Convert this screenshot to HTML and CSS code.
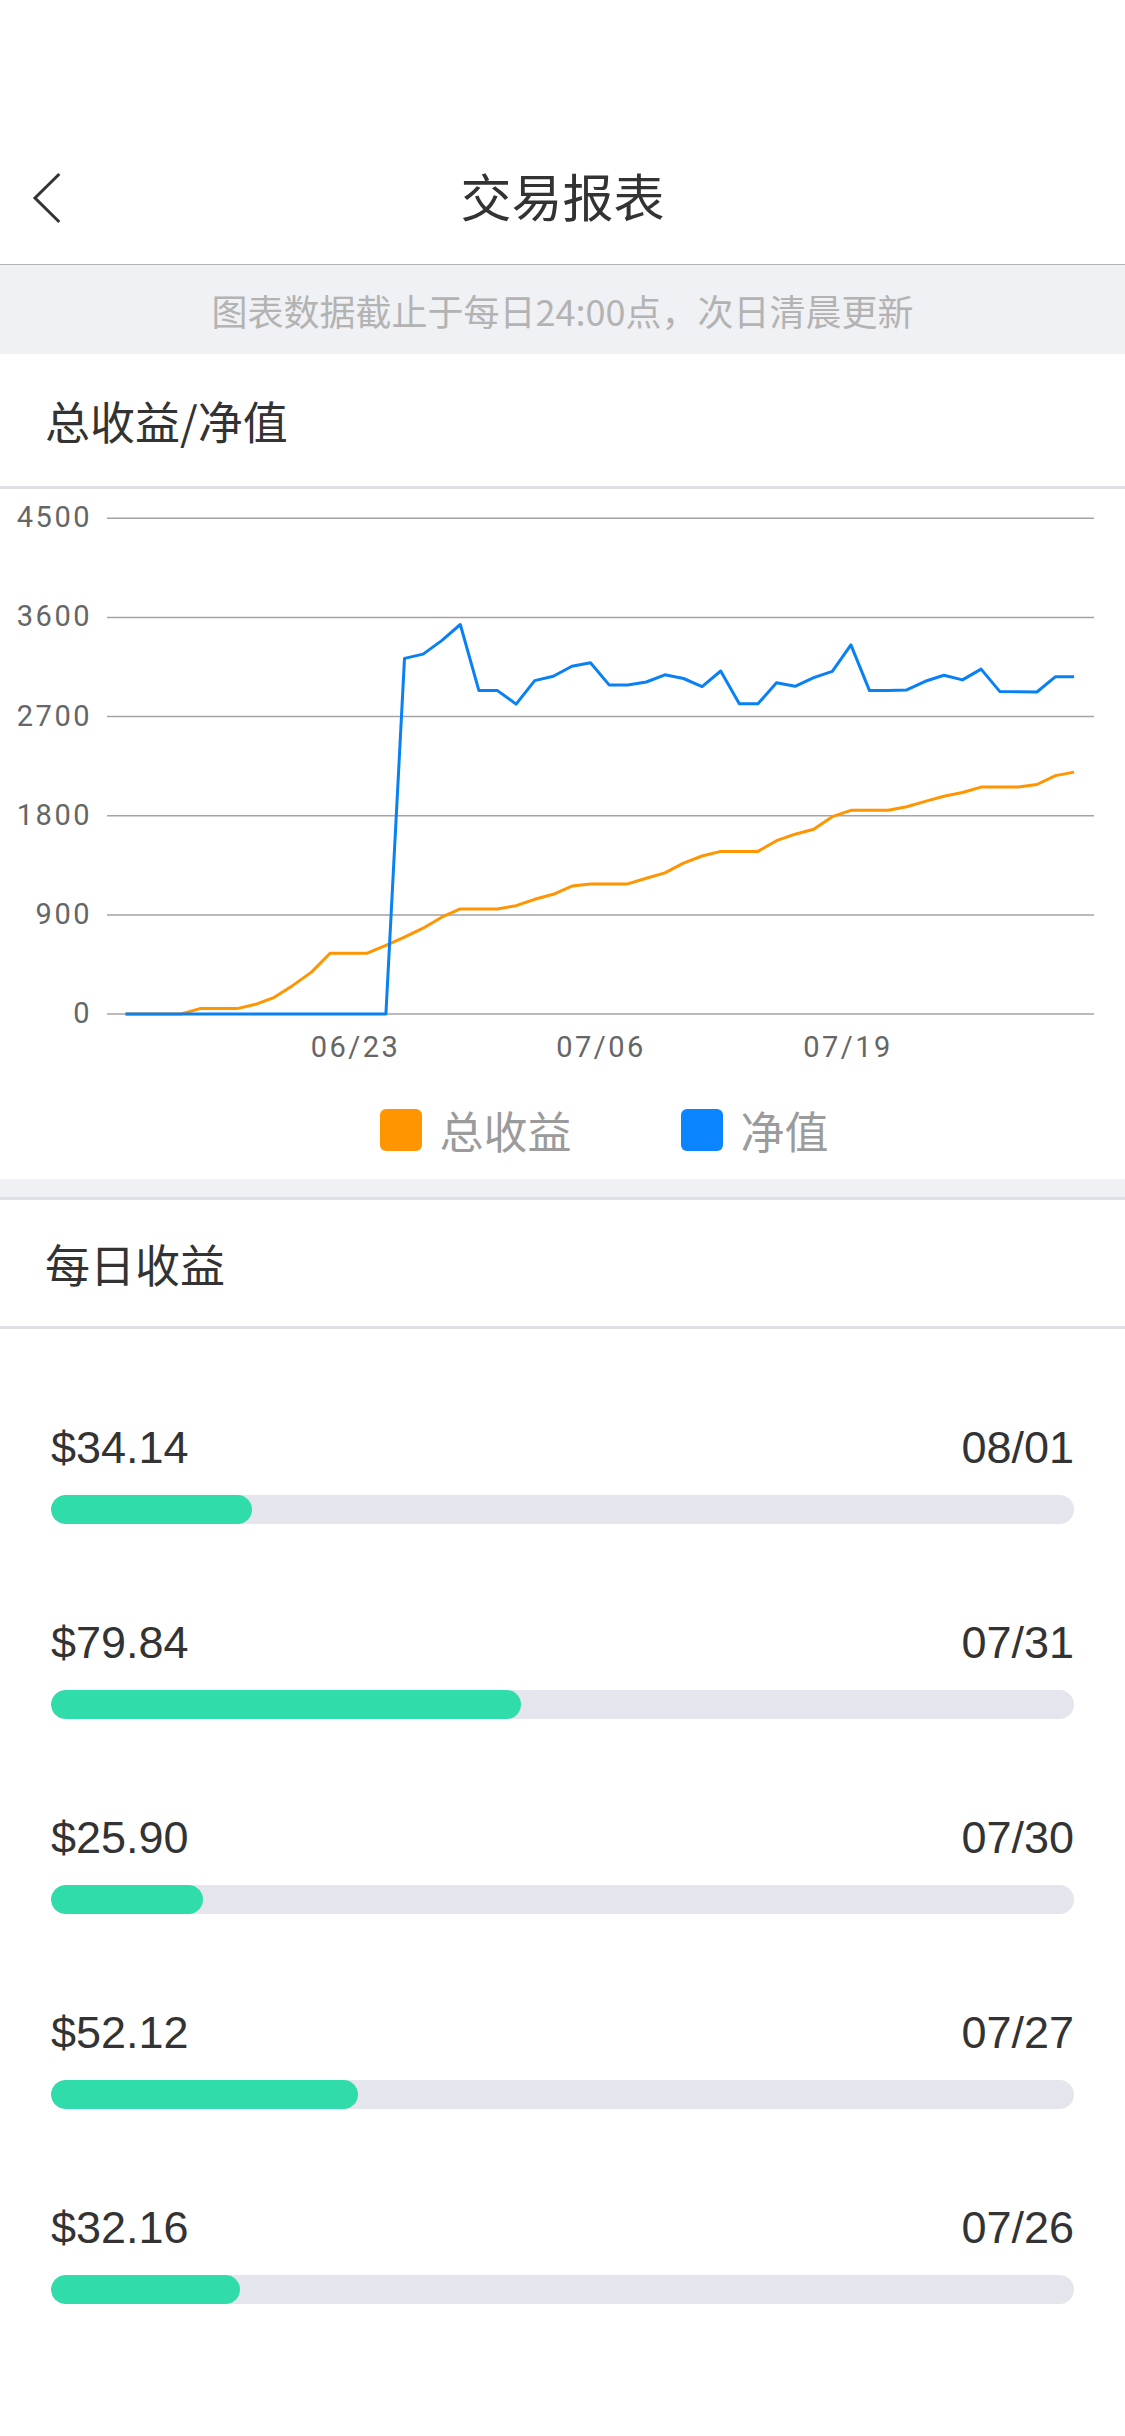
FILE: index.html
```html
<!DOCTYPE html>
<html lang="zh-CN">
<head>
  <meta charset="UTF-8">
  <meta name="viewport" content="width=device-width, initial-scale=1.0">
  <title>交易报表</title>
  <link rel="stylesheet" href="styles.css">
</head>
<body>
  <div class="page">
    <div class="status-bar"></div>

    <div class="nav">
      <a class="nav-back" href="#">
        <svg width="30" height="52" viewBox="0 0 30 52">
          <polyline points="27.3,2 3,26 27.3,50" fill="none" stroke="#333" stroke-width="3"/>
        </svg>
      </a>
      <div class="nav-title">交易报表</div>
      <div></div>
    </div>

    <div class="notice">图表数据截止于每日24:00点，次日清晨更新</div>

    <div class="section-head">总收益/净值</div>

    <div class="chart-panel">
      <svg class="chart" width="1125" height="590" viewBox="0 0 1125 590">
        <g class="grid">
          <line x1="107" x2="1094" y1="29.3" y2="29.3"/>
          <line x1="107" x2="1094" y1="128.4" y2="128.4"/>
          <line x1="107" x2="1094" y1="227.6" y2="227.6"/>
          <line x1="107" x2="1094" y1="326.7" y2="326.7"/>
          <line x1="107" x2="1094" y1="425.9" y2="425.9"/>
          <line x1="107" x2="1094" y1="525" y2="525"/>
        </g>
        <g class="axis-y">
          <text x="92" y="38.3">4500</text>
          <text x="92" y="137.4">3600</text>
          <text x="92" y="236.6">2700</text>
          <text x="92" y="335.7">1800</text>
          <text x="92" y="434.9">900</text>
          <text x="92" y="534">0</text>
        </g>
        <g class="axis-x">
          <text x="355.5" y="567.7">06/23</text>
          <text x="601" y="567.7">07/06</text>
          <text x="848" y="567.7">07/19</text>
        </g>
        <polyline id="line-total" class="line total"/>
        <polyline id="line-net" class="line net"/>
      </svg>

      <div class="legend">
        <div class="legend-item"><span class="swatch total"></span>总收益</div>
        <div class="legend-item"><span class="swatch net"></span>净值</div>
      </div>
    </div>

    <div class="gap"></div>

    <div class="section-head daily">每日收益</div>

    <div class="daily-list">
      <div class="day">
        <div class="day-row"><span>$34.14</span><span>08/01</span></div>
        <div class="bar"><div class="bar-fill" style="width: 19.6%"></div></div>
      </div>
      <div class="day">
        <div class="day-row"><span>$79.84</span><span>07/31</span></div>
        <div class="bar"><div class="bar-fill" style="width: 45.9%"></div></div>
      </div>
      <div class="day">
        <div class="day-row"><span>$25.90</span><span>07/30</span></div>
        <div class="bar"><div class="bar-fill" style="width: 14.9%"></div></div>
      </div>
      <div class="day">
        <div class="day-row"><span>$52.12</span><span>07/27</span></div>
        <div class="bar"><div class="bar-fill" style="width: 30%"></div></div>
      </div>
      <div class="day">
        <div class="day-row"><span>$32.16</span><span>07/26</span></div>
        <div class="bar"><div class="bar-fill" style="width: 18.5%"></div></div>
      </div>
    </div>
  </div>

  <script>
    // daily values, oldest first
    const totals = [0, 0, 0, 0, 49, 49, 49, 88, 152, 260, 380, 552, 552, 552, 623, 697, 779, 879,
      954, 954, 954, 983, 1041, 1087, 1161, 1181, 1181, 1181, 1233, 1281, 1369, 1434, 1476, 1476,
      1476, 1573, 1632, 1677, 1791, 1849, 1849, 1849, 1882, 1930, 1976, 2011, 2060, 2060, 2060,
      2083, 2164, 2196];
    const nets = [0, 0, 0, 0, 0, 0, 0, 0, 0, 0, 0, 0, 0, 0, 0, 3228, 3267, 3390, 3536, 2936, 2936,
      2813, 3027, 3066, 3157, 3189, 2988, 2988, 3014, 3079, 3046, 2972, 3114, 2816, 2816, 3007,
      2975, 3053, 3111, 3351, 2936, 2936, 2942, 3020, 3075, 3033, 3131, 2929, 2926, 2923, 3062, 3062];

    const left = 125.5, step = 18.6, base = 525, unit = 99.14 / 900;

    function points(values) {
      return values.map((v, i) => `${(left + i * step).toFixed(1)},${(base - v * unit).toFixed(1)}`).join(' ');
    }

    document.getElementById('line-total').setAttribute('points', points(totals));
    document.getElementById('line-net').setAttribute('points', points(nets));
  </script>
</body>
</html>
```

FILE: styles.css
```css
body {
  margin: 0;
  background: #fff;
  font-family: "Noto Sans CJK SC", sans-serif;
  color: #333;
}
.page {
  width: 1125px;
}
.status-bar {
  height: 132px;
}
.nav {
  height: 132px;
  display: grid;
  grid-template-columns: 1fr auto 1fr;
  align-items: center;
  border-bottom: 1px solid #b4b4b4;
}
.nav-back {
  display: flex;
  padding-left: 32px;
}
.nav-title {
  font-size: 51px;
  line-height: 1;
  padding-bottom: 6px;
  color: #333;
}
.notice {
  height: 89px;
  background: #f0f1f4;
  display: flex;
  align-items: center;
  justify-content: center;
  font-size: 36px;
  color: #b3b3b3;
}
.section-head {
  height: 132px;
  display: flex;
  align-items: center;
  padding-left: 45px;
  font-size: 45px;
  line-height: 1;
  border-bottom: 3px solid #dfdfe6;
}
.section-head.daily {
  height: 126px;
  padding-bottom: 0;
  border-top: 3px solid #dfdfe6;
}
.chart-panel {
  height: 690px;
  box-sizing: border-box;
}
.chart {
  display: block;
}
.grid line {
  stroke: #a3a3a3;
  stroke-width: 1.5;
}
.chart text {
  font-family: Roboto, sans-serif;
  font-size: 29px;
  letter-spacing: 2.5px;
  fill: #666;
}
.axis-y text {
  text-anchor: end;
}
.axis-x text {
  text-anchor: middle;
}
.line {
  fill: none;
  stroke-width: 3;
  stroke-linejoin: round;
}
.line.total {
  stroke: #ff9500;
}
.line.net {
  stroke: #0a80f5;
}
.legend {
  display: flex;
  justify-content: center;
  align-items: center;
  gap: 109px;
  height: 42px;
  margin-top: 30px;
  padding-left: 83px;
}
.legend-item {
  display: flex;
  align-items: center;
  gap: 18px;
  font-size: 44px;
  line-height: 1;
  color: #9b9b9b;
}
.swatch {
  width: 42px;
  height: 42px;
  border-radius: 6px;
}
.swatch.total {
  background: #ff9500;
}
.swatch.net {
  background: #0a84ff;
}
.gap {
  height: 18px;
  background: #f0f1f4;
}
.daily-list {
  padding: 0 51px;
}
.day {
  padding-top: 92px;
}
.day-row {
  display: flex;
  justify-content: space-between;
  font-family: "Liberation Sans", sans-serif;
  font-size: 45px;
  line-height: 54px;
  color: #333;
}
.bar {
  height: 29px;
  margin-top: 20px;
  border-radius: 15px;
  background: #e4e5ed;
  overflow: hidden;
}
.bar-fill {
  height: 100%;
  border-radius: 15px;
  background: #31dcab;
}
```
